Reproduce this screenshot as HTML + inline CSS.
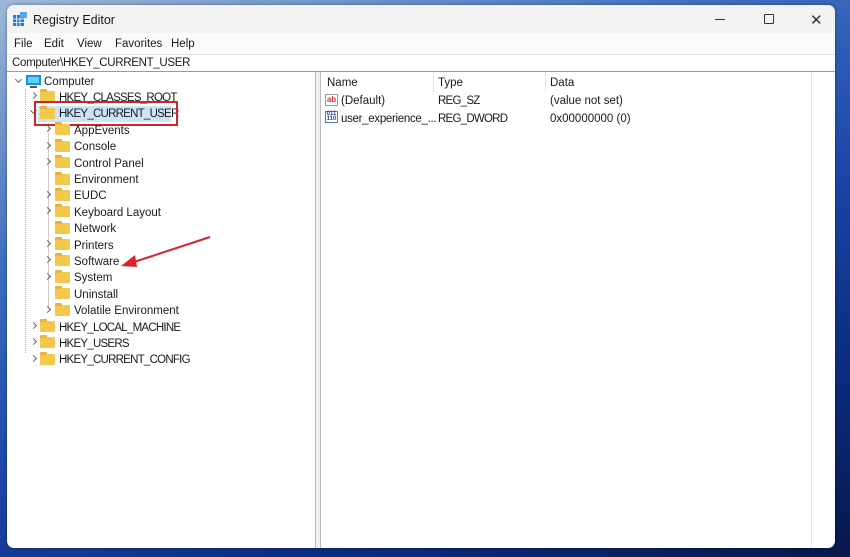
<!DOCTYPE html>
<html><head><meta charset="utf-8"><style>
*{margin:0;padding:0;box-sizing:border-box}
body{width:850px;height:557px;overflow:hidden;position:relative;font-family:"Liberation Sans",sans-serif;font-size:11.5px;color:#1a1a1a;
background:linear-gradient(160deg,#9fb8d6 0%,#3f6fc0 30%,#1b46a8 55%,#0a2a7a 80%,#08184a 100%)}
.win{position:absolute;left:7px;top:5px;width:828px;height:543px;background:#fff;border-radius:7px;overflow:hidden;box-shadow:0 0 3px rgba(0,0,0,.4)}
.a{position:absolute;white-space:nowrap}
.t{padding-top:1px}
.u{letter-spacing:-0.75px}
.fold{position:absolute;width:15px;height:11px;background:#f4c84a;border-radius:1px}
.fold:before{content:"";position:absolute;left:0;top:-2px;width:7px;height:3px;background:#e5b53a;border-radius:1px 1px 0 0}
.chev{position:absolute;width:5px;height:5px;border-right:1px solid #666;border-bottom:1px solid #666;transform:rotate(-45deg)}
.chevd{transform:rotate(45deg)}
</style></head><body>
<div class="win">
 <div class="a" style="left:0;top:0;width:828px;height:28px;background:#f3f3f3"></div>
 <svg class="a" style="left:6px;top:7px" width="14" height="14"><rect x="0" y="3" width="11" height="11" fill="#2b7cd3"/><rect x="7" y="0" width="7" height="6" fill="#58a6e8"/><path d="M0 7h11M0 10.5h11M3.5 3v11M7 6v8" stroke="#fff" stroke-width=".8"/></svg>
 <div class="a" style="left:26px;top:8px;font-size:12.5px">Registry Editor</div>
 <div class="a" style="left:708px;top:14px;width:10px;height:1px;background:#333"></div>
 <div class="a" style="left:757px;top:9px;width:10px;height:10px;border:1px solid #333;border-radius:1px"></div>
 <div class="a" style="left:803px;top:6px;font-size:15px;color:#333">✕</div>
 <div class="a" style="left:0;top:28px;width:828px;height:21px;background:#fbfbfb"></div>
 <div class="a t" style="left:7px;top:32px">File</div>
 <div class="a t" style="left:37px;top:32px">Edit</div>
 <div class="a t" style="left:70px;top:32px">View</div>
 <div class="a t" style="left:108px;top:32px">Favorites</div>
 <div class="a t" style="left:164px;top:32px">Help</div>
 <div class="a" style="left:0;top:49px;width:828px;height:1px;background:#e3e3e3"></div>
 <div class="a t" style="left:5px;top:51px"><span style="letter-spacing:-0.3px">Computer\HKEY_CURRENT_USER</span></div>
 <div class="a" style="left:0;top:66px;width:828px;height:1px;background:#9a9a9a"></div>
 <div class="a" style="left:308px;top:67px;width:6px;height:476px;background:#f0f0f0;border-left:1px solid #bdbdbd;border-right:1px solid #bdbdbd"></div>
 <div class="a" style="left:804px;top:67px;width:1px;height:476px;background:#e6e6e6"></div>
 <!-- tree -->
 <div class="chev chevd" style="left:9px;top:72px"></div>
 <svg class="a" style="left:19px;top:70px" width="16" height="14"><rect x="0" y="0" width="15" height="10" fill="#1f8fd6"/><rect x="2" y="2" width="11" height="6" fill="#5fd0f7"/><rect x="4" y="11" width="7" height="2" fill="#555"/></svg>
 <div class="a t" style="left:37px;top:70px">Computer</div>
 <div class="a" style="left:18px;top:84px;width:1px;height:264px;border-left:1px dotted #aaa"></div>
 <div class="a" style="left:41px;top:118px;width:1px;height:185px;border-left:1px solid #ccc"></div>

 <div class="chev" style="left:24px;top:88px"></div><div class="fold" style="left:33px;top:86px"></div><div class="a u t" style="left:52px;top:86px">HKEY_CLASSES_ROOT</div>
 <div class="a" style="left:31px;top:101px;width:133px;height:16px;background:#cce4f7"></div>
 <div class="chev chevd" style="left:24px;top:103px"></div><div class="fold" style="left:33px;top:103px"></div><div class="a u t" style="left:52px;top:102px">HKEY_CURRENT_USER</div>
 <div class="a" style="left:27px;top:96px;width:144px;height:25px;border:2px solid #d0232a"></div>

 <div class="chev" style="left:38px;top:121px"></div><div class="fold" style="left:48px;top:119px"></div><div class="a t" style="left:67px;top:119px">AppEvents</div>
 <div class="chev" style="left:38px;top:138px"></div><div class="fold" style="left:48px;top:136px"></div><div class="a t" style="left:67px;top:135px">Console</div>
 <div class="chev" style="left:38px;top:154px"></div><div class="fold" style="left:48px;top:152px"></div><div class="a t" style="left:67px;top:152px">Control Panel</div>
 <div class="fold" style="left:48px;top:169px"></div><div class="a t" style="left:67px;top:168px">Environment</div>
 <div class="chev" style="left:38px;top:187px"></div><div class="fold" style="left:48px;top:185px"></div><div class="a t" style="left:67px;top:184px">EUDC</div>
 <div class="chev" style="left:38px;top:203px"></div><div class="fold" style="left:48px;top:201px"></div><div class="a t" style="left:67px;top:201px">Keyboard Layout</div>
 <div class="fold" style="left:48px;top:218px"></div><div class="a t" style="left:67px;top:217px">Network</div>
 <div class="chev" style="left:38px;top:236px"></div><div class="fold" style="left:48px;top:234px"></div><div class="a t" style="left:67px;top:234px">Printers</div>
 <div class="chev" style="left:38px;top:252px"></div><div class="fold" style="left:48px;top:250px"></div><div class="a t" style="left:67px;top:250px">Software</div>
 <div class="chev" style="left:38px;top:269px"></div><div class="fold" style="left:48px;top:267px"></div><div class="a t" style="left:67px;top:266px">System</div>
 <div class="fold" style="left:48px;top:283px"></div><div class="a t" style="left:67px;top:283px">Uninstall</div>
 <div class="chev" style="left:38px;top:302px"></div><div class="fold" style="left:48px;top:300px"></div><div class="a t" style="left:67px;top:299px">Volatile Environment</div>
 <div class="chev" style="left:24px;top:318px"></div><div class="fold" style="left:33px;top:316px"></div><div class="a u t" style="left:52px;top:316px">HKEY_LOCAL_MACHINE</div>
 <div class="chev" style="left:24px;top:334px"></div><div class="fold" style="left:33px;top:332px"></div><div class="a u t" style="left:52px;top:332px">HKEY_USERS</div>
 <div class="chev" style="left:24px;top:351px"></div><div class="fold" style="left:33px;top:349px"></div><div class="a u t" style="left:52px;top:348px">HKEY_CURRENT_CONFIG</div>
 <svg class="a" style="left:110px;top:228px" width="100" height="36"><path d="M93 4L14 30" stroke="#d8242a" stroke-width="2"/><path d="M4 33L18 22L20 34Z" fill="#d8242a"/></svg>
 <!-- right pane -->
 <div class="a" style="left:426px;top:67px;width:1px;height:20px;background:#e5e5e5"></div>
 <div class="a" style="left:538px;top:67px;width:1px;height:20px;background:#e5e5e5"></div>
 <div class="a t" style="left:320px;top:71px">Name</div>
 <div class="a t" style="left:431px;top:71px">Type</div>
 <div class="a t" style="left:543px;top:71px">Data</div>
 <div class="a" style="left:318px;top:89px;width:13px;height:12px;border:1px solid #999;background:#fff;font-size:8px;color:#d33;line-height:9px;text-align:center;font-weight:bold">ab</div>
 <div class="a t" style="left:334px;top:89px">(Default)</div>
 <div class="a u t" style="left:431px;top:89px">REG_SZ</div>
 <div class="a t" style="left:543px;top:89px">(value not set)</div>
 <div class="a" style="left:318px;top:106px;width:13px;height:12px;border:1px solid #5577bb;background:#fff;font-size:6px;color:#2a4c9c;line-height:5px;text-align:center;font-weight:bold">011<br>110</div>
 <div class="a t" style="left:334px;top:107px;letter-spacing:-0.3px">user_experience_...</div>
 <div class="a u t" style="left:431px;top:107px">REG_DWORD</div>
 <div class="a t" style="left:543px;top:107px">0x00000000 (0)</div>
</div>
</body></html>
